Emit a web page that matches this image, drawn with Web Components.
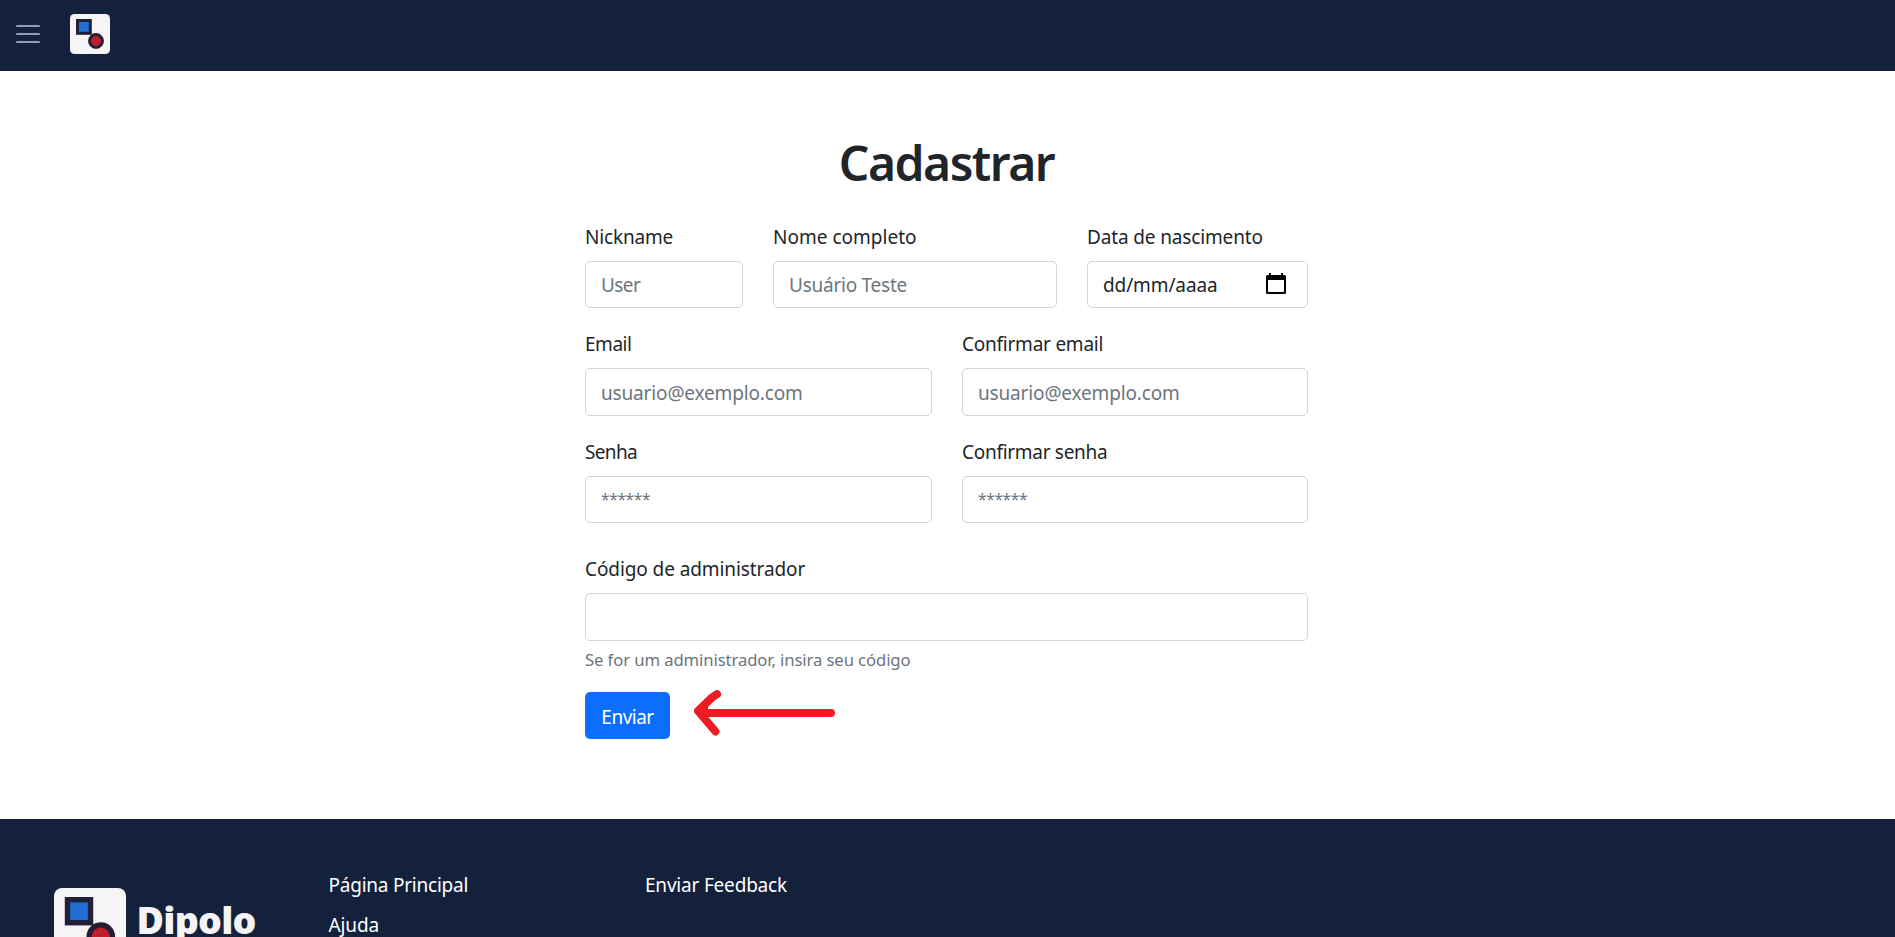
<!DOCTYPE html>
<html lang="pt-BR">
<head>
<meta charset="utf-8">
<title>Cadastrar</title>
<style>
html,body{margin:0;height:100%;overflow:hidden}
body{background:#fff;color:#212529;font:19px/30px "Noto Sans","Open Sans",sans-serif}
</style>
</head>
<body>
<dipolo-page></dipolo-page>
<script>
const define = (name, html, ready) => customElements.define(name, class extends HTMLElement {
  connectedCallback() {
    if (this.shadowRoot) return;
    const t = document.createElement('template');
    t.innerHTML = html;
    this.attachShadow({mode: 'open'}).append(t.content.cloneNode(true));
    if (ready) ready(this, this.shadowRoot);
  }
});

// Tracks its text so that the glyphs span the given width.
define('tracked-text', `<style>:host{display:inline-block;white-space:pre}</style><slot></slot>`, host => {
  const s = getComputedStyle(host), text = host.textContent;
  const c = document.createElement('canvas').getContext('2d');
  c.font = `${s.fontWeight} ${s.fontSize} ${s.fontFamily}`;
  const m = c.measureText(text);
  const ink = m.actualBoundingBoxRight + m.actualBoundingBoxLeft;
  host.style.letterSpacing = ((host.getAttribute('span') - ink) / (text.length - 1)).toFixed(3) + 'px';
});

define('dipolo-logo', `<style>:host{display:block;flex:none;width:40px;height:40px}svg{display:block;width:100%;height:100%}</style>
<svg viewBox="0 0 40 40"><rect width="40" height="40" rx="4.5" fill="#f6f4f4"/>
<rect x="7.5" y="6.5" width="12.8" height="12.8" fill="#1f6fd6" stroke="#20203a" stroke-width="3"/>
<circle cx="26" cy="27" r="6.5" fill="#bd1f2d" stroke="#261c33" stroke-width="2.9"/></svg>`);

define('top-bar', `<style>:host{display:flex;align-items:flex-start;box-sizing:border-box;height:71px;background:#14213d;padding:14px 16px}
.menu{display:flex;flex-direction:column;gap:6px;width:24px;padding-top:11px;margin-right:30px}
.menu i{height:2px;border-radius:1px;background:#949dae}</style>
<div class="menu"><i></i><i></i><i></i></div><dipolo-logo></dipolo-logo>`);

define('form-field', `<style>:host{display:block;min-width:0}
.label{box-sizing:border-box;height:30px;margin-bottom:10px;padding-top:.7px}
.box{display:flex;align-items:center;justify-content:space-between;box-sizing:border-box;height:47.5px;border:1px solid #ced4da;border-radius:5px;padding:1.400px 17px 0 15px;color:#6c757d;background:#fff}
</style><div class="label"><slot name="label"></slot></div><div class="box"><slot></slot><slot name="icon"></slot></div>`);

define('calendar-icon', `<style>:host{display:block;width:20px;height:22px;margin:-2px 4px 0 0}svg{display:block}</style>
<svg width="20" height="22" viewBox="0 0 20 22"><path fill="#000" fill-rule="evenodd" d="M3 0h2v2h10V0h2v2h1.5Q20 2 20 3.5v16Q20 21 18.5 21h-17Q0 21 0 19.500v-16Q0 2 1.500 2H3zM2 7v12h16V7z"/></svg>`);

define('submit-button', `<style>:host{display:flex;align-items:center;justify-content:center;box-sizing:border-box;width:85px;height:47px;padding-top:3px;border-radius:5px;background:#0d6efd;color:#fff}</style><slot></slot>`);

define('red-arrow', `<style>:host{display:block;width:142px;height:47px}svg{display:block}</style>
<svg width="142" height="47" viewBox="0 0 142 47"><path fill="none" stroke="#ed1c24" stroke-width="8" stroke-linecap="round" stroke-linejoin="round" d="M137 23H8M23 4.200L18 7.500 4 21 21.500 41.500"/><path fill="#ed1c24" d="M1 21L14 15v16L5 26z"/></svg>`);

define('sign-up', `<style>:host{display:block;box-sizing:border-box;width:723px;height:748px;margin-left:585px;padding-top:62px}
h1{margin:0 0 27.900px;height:60px;font-size:48px;font-weight:600;line-height:60px;text-align:center}
.row{display:grid;gap:30px;margin-bottom:20px}
.three{grid-template-columns:158px 284px 221px}.two{grid-template-columns:347px 346px}
.admin{margin-top:30px}
.stars{font-size:15.500px;margin-top:-3px}
.date{color:#212529}
.hint{box-sizing:border-box;margin:5px 0 20px;height:26px;padding-top:1px;line-height:26px;font-size:16.700px;color:#6c757d}
.actions{display:flex;gap:24px}red-arrow{margin-top:-2px}
</style>
<h1><tracked-text span="215">Cadastrar</tracked-text></h1>
<div class="row three">
<form-field><tracked-text slot="label" span="86.5">Nickname</tracked-text><tracked-text span="39">User</tracked-text></form-field>
<form-field><tracked-text slot="label" span="142">Nome completo</tracked-text><tracked-text span="116.5">Usuário Teste</tracked-text></form-field>
<form-field><tracked-text slot="label" span="174.5">Data de nascimento</tracked-text><tracked-text class="date" span="113">dd/mm/aaaa</tracked-text><calendar-icon slot="icon"></calendar-icon></form-field>
</div>
<div class="row two">
<form-field><tracked-text slot="label" span="45">Email</tracked-text><tracked-text span="200">usuario@exemplo.com</tracked-text></form-field>
<form-field><tracked-text slot="label" span="139.5">Confirmar email</tracked-text><tracked-text span="200">usuario@exemplo.com</tracked-text></form-field>
</div>
<div class="row two">
<form-field><tracked-text slot="label" span="52">Senha</tracked-text><tracked-text class="stars" span="49">******</tracked-text></form-field>
<form-field><tracked-text slot="label" span="144">Confirmar senha</tracked-text><tracked-text class="stars" span="49">******</tracked-text></form-field>
</div>
<form-field class="admin"><tracked-text slot="label" span="219.5">Código de administrador</tracked-text></form-field>
<div class="hint"><tracked-text span="325.5">Se for um administrador, insira seu código</tracked-text></div>
<div class="actions"><submit-button><tracked-text span="52">Enviar</tracked-text></submit-button><red-arrow></red-arrow></div>`);

define('site-footer', `<style>:host{display:grid;grid-template-columns:274.500px 316.500px 1fr;box-sizing:border-box;height:118px;overflow:hidden;padding:51px 0 0 54px;background:#14213d;color:#fff}
.brand{display:flex;padding-top:18px;gap:10.500px}.brand dipolo-logo{width:72px;height:72px}
.name{font-size:37.500px;font-weight:900;line-height:50px;color:#f4f4f6;padding-top:7px}
.links{display:flex;flex-direction:column;gap:10px}</style>
<div class="brand"><dipolo-logo></dipolo-logo><div class="name"><tracked-text span="117">Dipolo</tracked-text></div></div>
<div class="links"><tracked-text span="138">Página Principal</tracked-text><tracked-text span="50">Ajuda</tracked-text></div>
<div class="links"><tracked-text span="141">Enviar Feedback</tracked-text></div>`);

define('dipolo-page', `<style>:host{display:block}</style><top-bar></top-bar><sign-up></sign-up><site-footer></site-footer>`);
</script>
</body>
</html>
